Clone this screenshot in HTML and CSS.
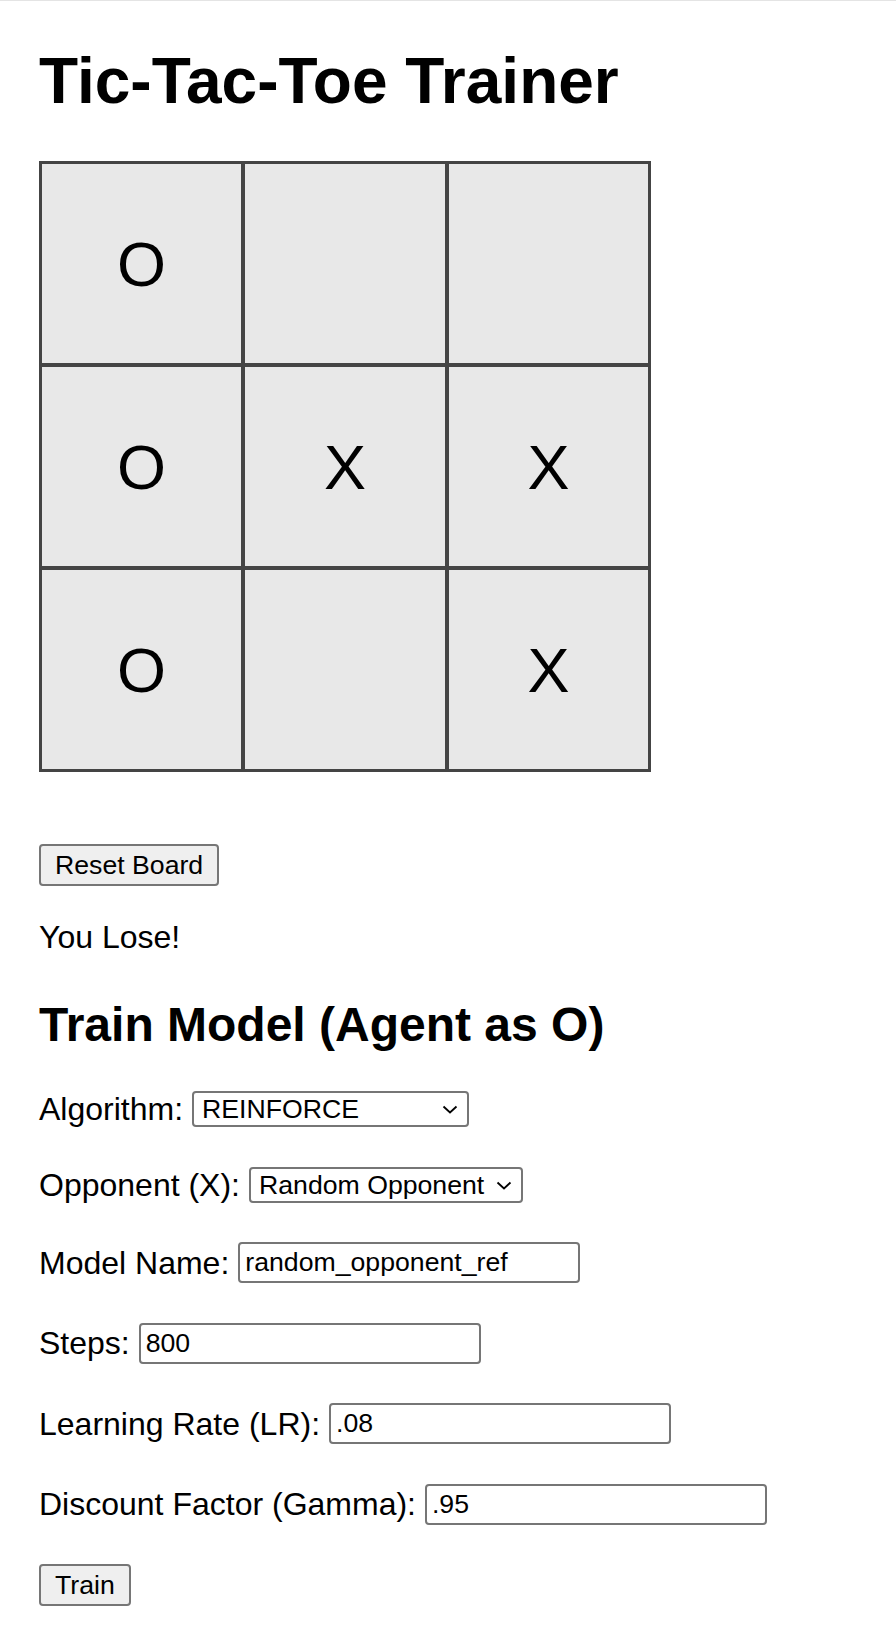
FILE: index.html
```html
<!DOCTYPE html>
<html lang="en">
<head>
<meta charset="utf-8">
<title>Tic-Tac-Toe Trainer</title>
<link rel="stylesheet" href="styles.css">
</head>
<body>
<h1 class="title">Tic-Tac-Toe Trainer</h1>
<div class="board">
  <div class="cell">O</div>
  <div class="cell"></div>
  <div class="cell"></div>
  <div class="cell">O</div>
  <div class="cell">X</div>
  <div class="cell">X</div>
  <div class="cell">O</div>
  <div class="cell"></div>
  <div class="cell">X</div>
</div>
<div class="actions"><button class="btn" type="button">Reset Board</button></div>
<p class="status">You Lose!</p>
<h2 class="section-title">Train Model (Agent as O)</h2>
<div class="field">
  <label class="field-label" for="algo">Algorithm:</label>
  <span class="select-wrap">
    <select class="select select-algo" id="algo">
      <option>REINFORCE</option>
      <option>Actor-Critic</option>
    </select>
    <svg class="chev" width="16" height="9" viewBox="0 0 16 9" aria-hidden="true"><path d="M1.5 1.5 L8 7.5 L14.5 1.5" fill="none" stroke="#000" stroke-width="1.8"/></svg>
  </span>
</div>
<div class="field">
  <label class="field-label" for="opp">Opponent (X):</label>
  <span class="select-wrap">
    <select class="select select-opp" id="opp">
      <option>Random Opponent</option>
      <option>Minimax Opponent</option>
    </select>
    <svg class="chev" width="16" height="9" viewBox="0 0 16 9" aria-hidden="true"><path d="M1.5 1.5 L8 7.5 L14.5 1.5" fill="none" stroke="#000" stroke-width="1.8"/></svg>
  </span>
</div>
<div class="field">
  <label class="field-label" for="name">Model Name:</label>
  <input class="text-input" id="name" type="text" value="random_opponent_ref">
</div>
<div class="field">
  <label class="field-label" for="steps">Steps:</label>
  <input class="text-input" id="steps" type="text" value="800">
</div>
<div class="field">
  <label class="field-label" for="lr">Learning Rate (LR):</label>
  <input class="text-input" id="lr" type="text" value=".08">
</div>
<div class="field">
  <label class="field-label" for="gamma">Discount Factor (Gamma):</label>
  <input class="text-input" id="gamma" type="text" value=".95">
</div>
<button class="btn" type="button">Train</button>
</body>
</html>
```

FILE: styles.css
```css
html {
  background: #ffffff;
}

body {
  margin: 0;
  border-top: 1px solid #e4e4e4;
  padding: 0 39px 40px;
  font-family: "Liberation Sans", Arial, sans-serif;
  font-size: 32px;
  color: #000000;
}

.title {
  font-size: 64px;
  font-weight: bold;
  margin: 43px 0 43px;
}

.board {
  display: grid;
  grid-template-columns: 203px 204px 203px;
  grid-auto-rows: 203px;
  width: max-content;
  border: 1px solid #444444;
}

.cell {
  box-sizing: border-box;
  border: 2px solid #444444;
  background: #e8e8e8;
  display: flex;
  align-items: center;
  justify-content: center;
  font-size: 63px;
  color: #000000;
}

.actions {
  margin-top: 72px;
}

.btn {
  box-sizing: border-box;
  height: 42px;
  padding: 0 14px;
  font-family: "Liberation Sans", Arial, sans-serif;
  font-size: 26.67px;
  color: #000000;
  background: #efefef;
  border: 2px solid #767676;
  border-radius: 4px;
}

.status {
  margin: 33px 0 0;
}

.section-title {
  font-size: 48px;
  font-weight: bold;
  margin: 41px 0 39px;
}

.field {
  display: flex;
  align-items: center;
  column-gap: 9px;
  margin-bottom: 39.5px;
}

.field-label {
  line-height: 32px;
}

.select-wrap {
  position: relative;
  display: inline-flex;
}

.select {
  appearance: none;
  -webkit-appearance: none;
  box-sizing: border-box;
  height: 36px;
  padding: 0 8px;
  font-family: "Liberation Sans", Arial, sans-serif;
  font-size: 26.67px;
  color: #000000;
  background: #ffffff;
  border: 2px solid #767676;
  border-radius: 4px;
}

.select-algo {
  width: 277px;
}

.select-opp {
  width: 274px;
}

.chev {
  position: absolute;
  right: 11px;
  top: 50%;
  margin-top: -4px;
  pointer-events: none;
}

.text-input {
  box-sizing: border-box;
  width: 342px;
  height: 41px;
  padding: 2px 5px;
  font-family: "Liberation Sans", Arial, sans-serif;
  font-size: 26.67px;
  color: #000000;
  background: #ffffff;
  border: 2px solid #767676;
  border-radius: 4px;
}
```
